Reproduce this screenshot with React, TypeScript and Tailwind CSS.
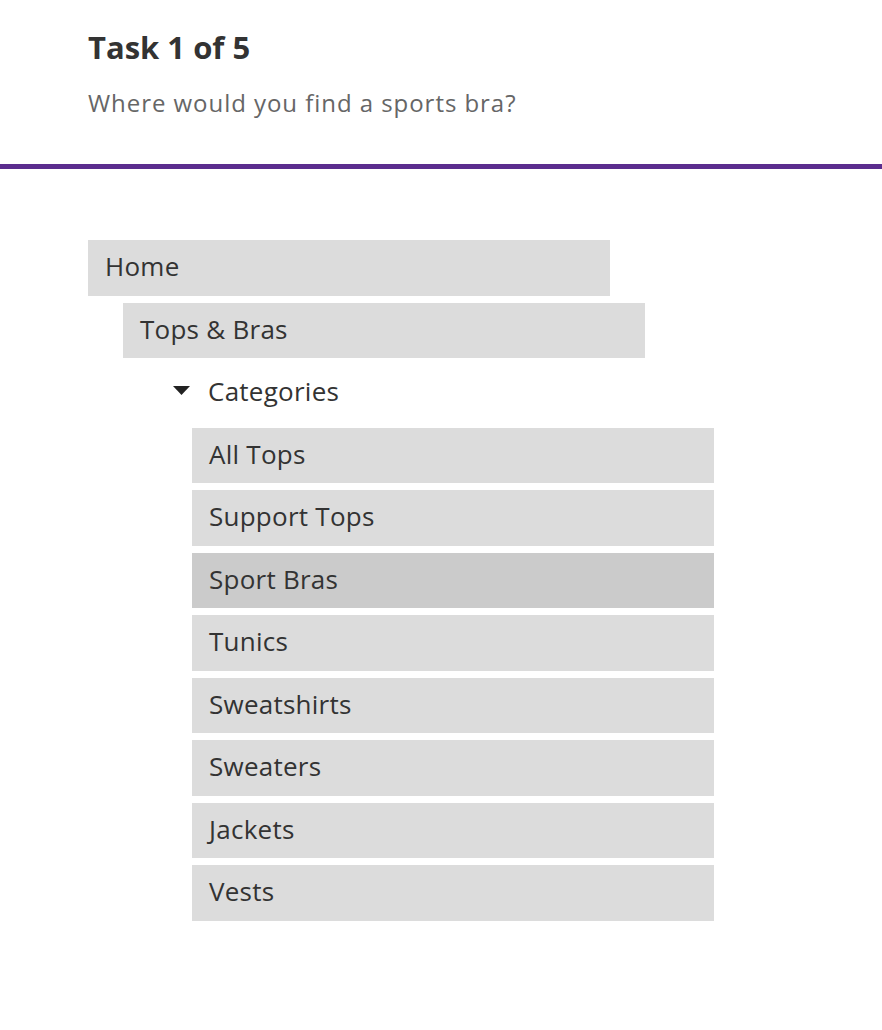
import React from "react";

const items = [
  "All Tops",
  "Support Tops",
  "Sport Bras",
  "Tunics",
  "Sweatshirts",
  "Sweaters",
  "Jackets",
  "Vests",
];

export default function App() {
  return (
    <div
      className="w-[882px] h-[1030px] bg-white overflow-hidden"
      style={{ fontFamily: "'Open Sans', Lato, sans-serif" }}
    >
      <header className="pl-[88px] pt-[28px] h-[164px]">
        <h1 className="text-[31px] leading-[38px] font-bold text-[#333333]">
          Task 1 of 5
        </h1>
        <p className="mt-[22px] text-[24px] leading-[30px] text-[#666666] tracking-[0.95px]">
          Where would you find a sports bra?
        </p>
      </header>
      <div className="h-[5px] bg-[#5b2d8e]" />
      <div className="pt-[71px] pl-[88px] flex flex-col gap-[7px] text-[26px] leading-[30px] text-[#333333] tracking-[0.25px]">
        <div className="w-[522px] h-[55.5px] bg-[#dcdcdc] flex items-center pl-[17px] pb-[3px]">
          Home
        </div>
        <div className="ml-[35px] w-[522px] h-[55.5px] bg-[#dcdcdc] flex items-center pl-[17px] pb-[3px]">
          Tops &amp; Bras
        </div>
        <div className="ml-[85px] h-[55.5px] flex items-center pb-[3px]">
          <svg width="17" height="9" viewBox="0 0 17 9" className="mr-[18px] mb-[2px]">
            <polygon points="0,0 17,0 8.5,9" fill="#222222" />
          </svg>
          <span>Categories</span>
        </div>
        {items.map((it) => (
          <div
            key={it}
            className={`ml-[104px] w-[522px] h-[55.5px] flex items-center pl-[17px] pb-[3px] ${
              it === "Sport Bras" ? "bg-[#cbcbcb]" : "bg-[#dcdcdc]"
            }`}
          >
            {it}
          </div>
        ))}
      </div>
    </div>
  );
}
